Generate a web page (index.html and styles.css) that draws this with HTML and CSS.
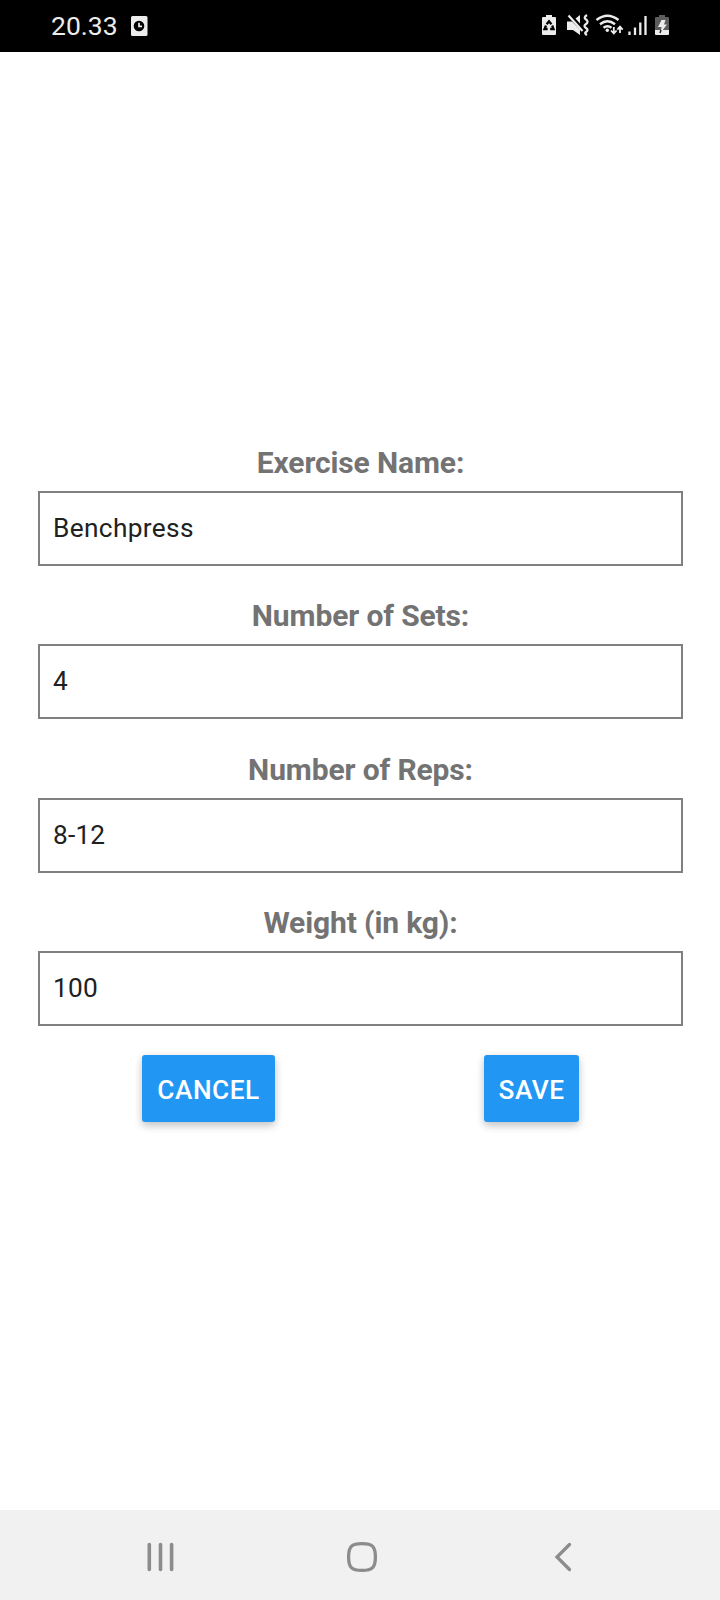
FILE: index.html
```html
<!DOCTYPE html>
<html lang="en">
<head>
<meta charset="utf-8">
<title>Edit exercise</title>
<link rel="stylesheet" href="styles.css">
</head>
<body>
<div class="screen">
  <header class="status">
    <span class="time">20.33</span>
    <svg class="clock-icon" width="18" height="22" viewBox="0 0 18 22">
      <rect x="1" y="1" width="16.500" height="20" rx="1.5" fill="#ececec"/>
      <circle cx="9" cy="11" r="5.3" fill="#000"/>
      <path d="M9 7.800v3.500h3" fill="none" stroke="#ececec" stroke-width="1.700"/>
    </svg>
    <svg class="system-icons" width="130" height="24" viewBox="540 13 130 24">
      <path d="M546 15h6v2h3q1 0 1 1v16q0 1-1 1h-12q-1 0-1-1V18q0-1 1-1h3z" fill="#ececec"/>
      <path d="M546.600 24.300l2.400-3 2.400 3M552.200 25.500l1.300 3.500h-3.300M547.600 29h-3.100l1.500-3.500" fill="none" stroke="#000" stroke-width="2.300"/>
      <path d="M567 21.500h5l8 8v5.500l-7-5h-6zM575.500 18.500l4.500-3.500v8.500z" fill="#ececec"/>
      <path d="M568.500 15.500l14 15.500" stroke="#ececec" stroke-width="2.200"/>
      <path d="M587 15q-4 2.500-1 4.500t0 4.500q-3 2 0 4t0 4q-2 1.500 1 3" fill="none" stroke="#ececec" stroke-width="2.300"/>
      <path d="M596.500 20q11-8.600 22 0M600 24.300q7.500-6 15 0M603.500 27.700q4-3 8 0" fill="none" stroke="#ececec" stroke-width="2.400"/>
      <circle cx="607.300" cy="30.200" r="1.700" fill="#ececec"/>
      <path d="M613.800 27v6M611 30.500l2.800 3 2.800-3M620 33v-6M617.300 29.700l2.700-3 2.700 3" fill="none" stroke="#ececec" stroke-width="1.800"/>
      <path d="M629.500 31.500v3.500M635 27.500v7.500M640.300 22.500v12.500M645.500 16v19" stroke="#ececec" stroke-width="2.300"/>
      <path d="M659 15h6v2h3q1 0 1 1v12h-14V18q0-1 1-1h3z" fill="#5c5c5c"/>
      <path d="M655 30h14v4q0 1-1 1h-12q-1 0-1-1z" fill="#ececec"/>
      <path d="M661.500 20h4l-1.500 4.500h3l-6.500 8.500 1-6h-3.500z" fill="#ececec"/>
      <path d="M660 33l1-3" stroke="#222" stroke-width="1.500"/>
    </svg>
  </header>
  <main class="form">
    <label class="field"><span class="label">Exercise Name:</span><input class="input" value="Benchpress"></label>
    <label class="field"><span class="label">Number of Sets:</span><input class="input" value="4"></label>
    <label class="field"><span class="label">Number of Reps:</span><input class="input numeric" value="8-12"></label>
    <label class="field"><span class="label">Weight (in kg):</span><input class="input numeric" value="100"></label>
    <div class="actions">
      <button class="button cancel">CANCEL</button>
      <button class="button save">SAVE</button>
    </div>
  </main>
  <nav class="navbar">
    <svg width="28" height="30" viewBox="0 0 28 30"><path d="M2.300 2.500v25M13.500 2.500v25M24.600 2.500v25" stroke="#8c8c8c" stroke-width="3.600" stroke-linecap="round"/></svg>
    <svg class="home" width="32" height="32" viewBox="0 0 32 32"><path d="M16 2.600C26.500 2.600 29.400 5.500 29.400 16S26.500 29.400 16 29.400 2.600 26.500 2.600 16 5.500 2.600 16 2.600z" fill="none" stroke="#8c8c8c" stroke-width="3.300"/></svg>
    <svg width="18" height="30" viewBox="0 0 18 30"><path d="M15.500 2.500L3 15l12.500 12.500" fill="none" stroke="#8c8c8c" stroke-width="3.300" stroke-linecap="round"/></svg>
  </nav>
</div>
</body>
</html>
```
FILE: styles.css
```css
* { box-sizing: border-box; }
body { margin: 0; font-family: Roboto, sans-serif; background: #fff; }
.screen { display: flex; flex-direction: column; width: 720px; height: 1600px; }
.status { display: flex; align-items: center; height: 52px; padding: 0 50px 2px 51px; background: #000; }
.time { font-size: 26.500px; line-height: 50px; padding-top: 2px; color: #ececec; }
.clock-icon { margin-left: 12px; margin-top: 1px; }
.system-icons { margin-left: auto; }
.form { flex: 1; padding: 393px 37px 0 38px; }
.field { display: block; margin-bottom: 32.330px; }
.label { display: block; margin-bottom: 11px; font-size: 30px; line-height: 35px; font-weight: 700; letter-spacing: -.13px; color: #737373; text-align: center; }
.input { display: block; width: 100%; height: 75px; padding: 0 13px 2px; border: 2px solid #808080; border-radius: 0; background: #fff; font: 26.250px Roboto, sans-serif; letter-spacing: .35px; color: #212121; outline: 0; }
.numeric { padding-bottom: 0; letter-spacing: .2px; }
.actions { display: flex; justify-content: space-between; margin-top: -3.330px; padding: 0 104px; }
.button { height: 67px; padding: 3px 0 0; border: 0; border-radius: 3px; background: #2196f3; color: #fff; font: 500 26.250px Roboto, sans-serif; letter-spacing: .5px; box-shadow: 0 4px 8px rgba(0, 0, 0, .2), 0 1px 8px rgba(0, 0, 0, .06); }
.cancel { width: 133px; }
.save { width: 95px; }
.navbar { display: flex; justify-content: space-between; align-items: center; height: 90px; padding: 3px 148px 0 147px; background: #f1f1f1; }
.home { margin-right: 5px; }
```
